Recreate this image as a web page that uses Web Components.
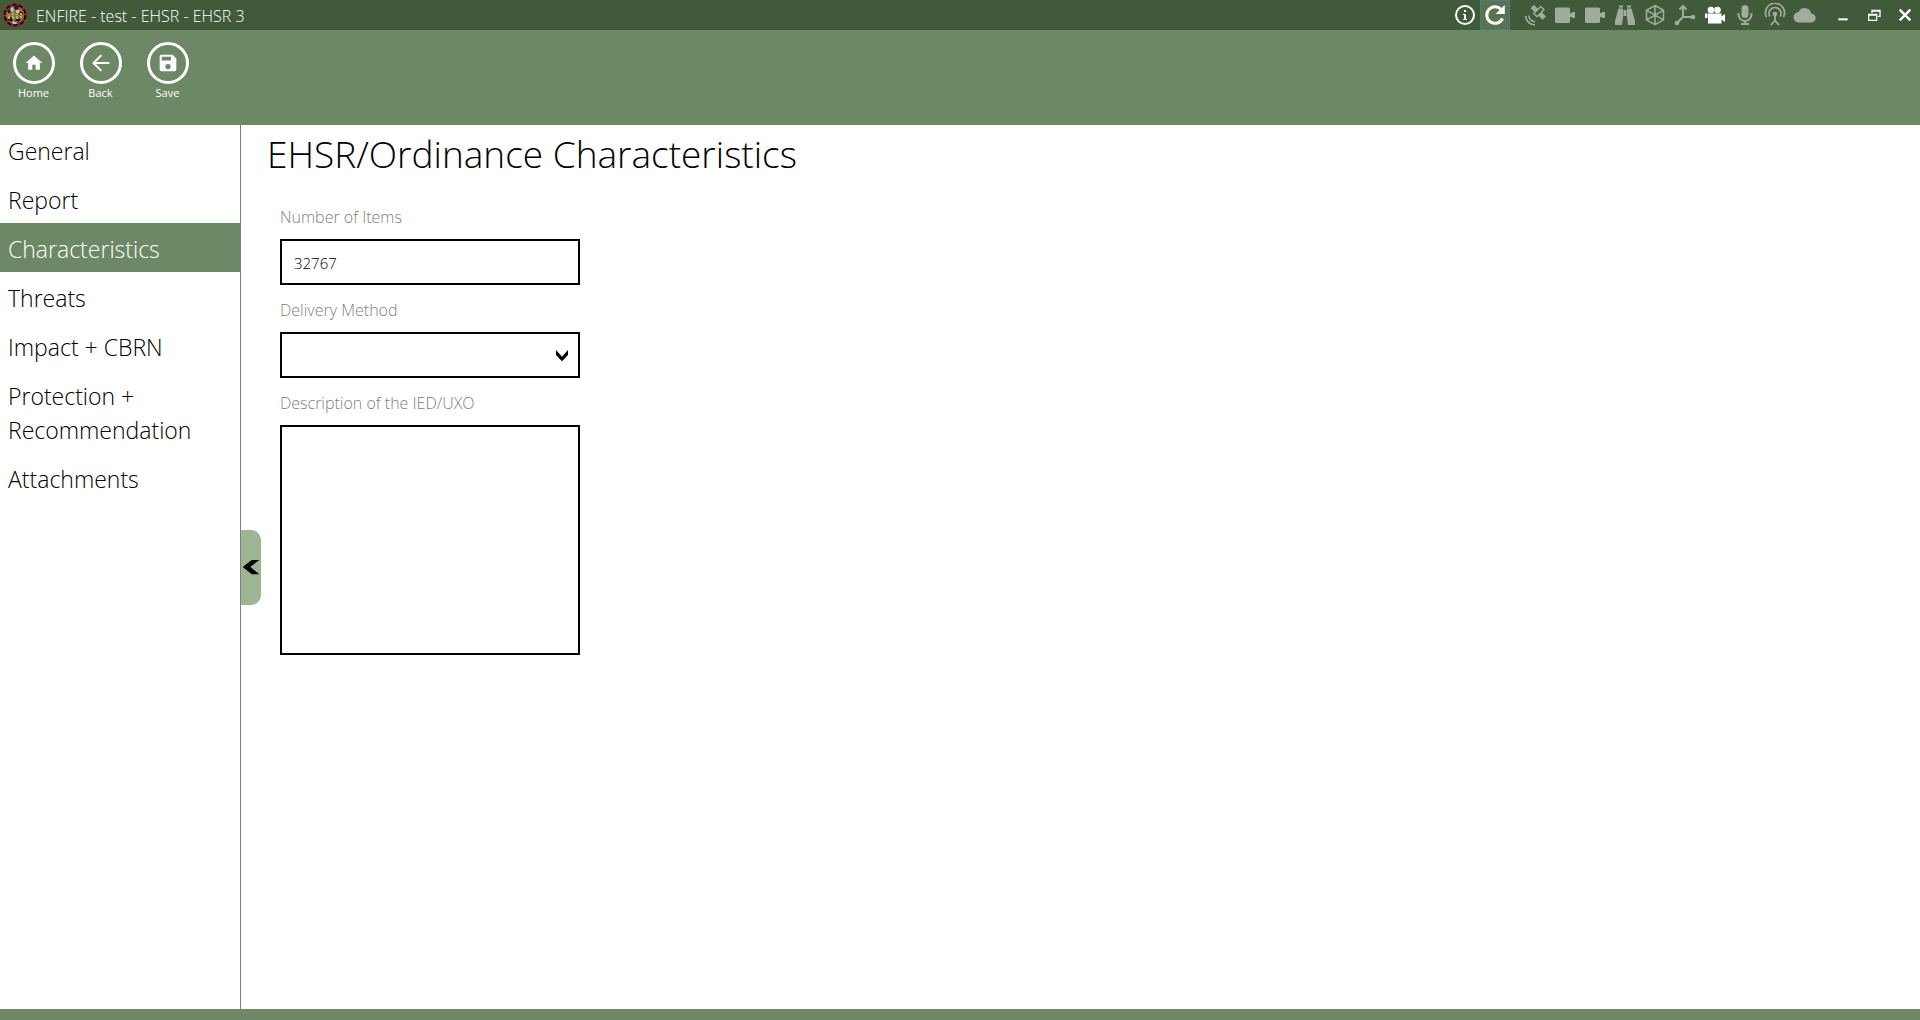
<!DOCTYPE html>
<html lang="en">
<head>
<meta charset="utf-8">
<title>ENFIRE - test - EHSR - EHSR 3</title>
<style>
  html, body { margin: 0; height: 100%; }
  body { font-family: "Open Sans", "Noto Sans", sans-serif; font-weight: 300; color: #000; background: #fff;
    --bar: #6d8864; --title: #415b3a; }
</style>
</head>
<body>
<enfire-app></enfire-app>
<script>
const define = (name, html, setup) => customElements.define(name, class extends HTMLElement {
  constructor() {
    super();
    this.attachShadow({ mode: 'open' }).innerHTML = html;
  }
  connectedCallback() { if (setup) setup(this, this.shadowRoot); }
});

const icons = {
  info: '<circle cx="12" cy="12" r="9" fill="none" stroke="currentColor" stroke-width="2"/><path d="M11 7h2v2h-2zM10 11h3v5h1v1h-4v-1h1v-4h-1z"/>',
  refresh: '<path d="M19.600 15.500A8.300 8.300 0 1 1 18 6.200" fill="none" stroke="currentColor" stroke-width="3"/><path d="M21.800 2v9h-9.300z"/>',
  satellite: '<path d="M11 1.800l4.200 4.200-3.400 3.400L7.600 5.200zM18.800 9.200l4.200 4.200-3.400 3.400-4.200-4.200z"/><path d="M17.800 3.600l3.200 3.200-7 7-3.200-3.200z" fill="none" stroke="currentColor" stroke-width="1.400"/><path d="M5.800 12.500a6.500 6.500 0 0 0 6.200 6.200M2.500 13A10 10 0 0 0 12 22" fill="none" stroke="currentColor" stroke-width="1.700"/>',
  plug: '<rect x="2" y="4.500" width="15" height="15.500" rx="1.500"/><path d="M16 10h3V9h3v6h-3v-1h-3z"/>',
  binoculars: '<path d="M6 2.500h4v2H6zM14 2.500h4v2h-4zM5.500 5.500H10V14l-1 8H2v-4zM18.500 5.500H14V14l1 8h7v-4zM10.500 7h3v6h-3z"/>',
  cube: '<path d="M12 2.500l8.500 4.800v9.500L12 21.600l-8.500-4.800V7.300zM3.500 7.300l8.500 4.700 8.500-4.700M12 12v9.500M12 2.500V12M3.500 16.800L12 12l8.500 4.800" fill="none" stroke="currentColor" stroke-width="1.500"/>',
  axes: '<path d="M10 4v10.500M10 14h10M10 14l-6 6" fill="none" stroke="currentColor" stroke-width="2"/><path d="M6.500 6.500L10 3l3.500 3.500" fill="none" stroke="currentColor" stroke-width="2"/><circle cx="20" cy="14" r="2.300"/><circle cx="4" cy="20" r="2.300"/>',
  camera: '<circle cx="8" cy="7" r="3.300"/><circle cx="14.500" cy="7" r="3.300"/><path d="M5 10.500h13.500v3l3.500-2.500v8l-3.500-2.500v4H5zM2 10.500h2.500V15H2z"/>',
  mic: '<rect x="8.500" y="2" width="7" height="13" rx="3.500"/><path d="M5.500 10v1.500a6.500 6.500 0 0 0 13 0V10M12 18v3M8 21h8" fill="none" stroke="currentColor" stroke-width="2"/>',
  antenna: '<path d="M3.500 14A9.500 9.500 0 1 1 20.500 14M6.800 13.500a6 6 0 1 1 10.400 0" fill="none" stroke="currentColor" stroke-width="1.700"/><circle cx="12" cy="11" r="2.300"/><path d="M12 12v6M8 22l4-4.500 4 4.500" fill="none" stroke="currentColor" stroke-width="1.800"/>',
  cloud: '<path d="M18.300 10.500A6.800 6.800 0 0 0 5.500 9 5 5 0 0 0 6 19.500h12a4.500 4.500 0 0 0 .3-9z"/>',
  minimize: '<path d="M5 17h14v3H5z"/>',
  restore: '<path d="M8 4h14v11h-4v-2h2V7H10v2H8z"/><path d="M3 10h14v11H3zm2 3v6h10v-6z" fill-rule="evenodd"/>',
  close: '<path d="M4 4l16 16M20 4L4 20" fill="none" stroke="currentColor" stroke-width="3.600"/>',
  home: '<path d="M10 20v-6h4v6h5v-8h3L12 3 2 12h3v8z"/>',
  back: '<path d="M22 12H3.500M12.500 2.500L3 12l9.500 9.500" fill="none" stroke="currentColor" stroke-width="2.400"/>',
  save: '<path d="M17.500 2H4a2 2 0 0 0-2 2v16a2 2 0 0 0 2 2h16a2 2 0 0 0 2-2V6.500zM12 19.500a3.200 3.200 0 1 1 0-6.400 3.200 3.200 0 0 1 0 6.400zM15.500 9H4.500V4.500h11z" fill-rule="evenodd"/>',
  left: '<path d="M1 12L13 2.500h10L11 12l12 9.500H13z"/>',
  down: '<path d="M3 4.500l9 10 9-10V12l-9 9.500L3 12z"/>'
};

define('ui-icon', `<style>:host{display:block;width:24px;height:24px}svg{display:block;width:100%;height:100%;fill:currentColor}</style><svg viewBox="0 0 24 24" aria-hidden="true"></svg>`,
  (el, root) => { root.querySelector('svg').innerHTML = icons[el.getAttribute('name')] || ''; });

define('app-emblem', `<style>:host{display:block;width:24px;height:24px}svg{display:block}</style>
<svg width="24" height="24" viewBox="0 0 24 24" aria-hidden="true">
<circle cx="12" cy="12" r="12" fill="#b92e1c"/><circle cx="12" cy="12" r="10.400" fill="none" stroke="#160807" stroke-width="2" stroke-dasharray="5 1.500"/>
<circle cx="12" cy="12" r="9" fill="#77746b"/>
<path d="M4 8l3-3 2 2-3 4zM11 3h5l-1 4h-3zM17 8l3 2-1 4-3-2zM4 16l5-2 1 5-4-1zM13 15l5 1-3 4h-3z" fill="#231b18"/>
<path d="M7 6l3-2 1 4-3 1zM13 7l4-1-1 4h-3zM9 18l3 1 3-1-2 3h-3z" fill="#c2bfb5"/>
<path d="M5 11h2v5H5zM9 10h2v6H9zM13 11h2v5h-2zM17 10h2v5h-2z" fill="#d2a735"/>
<path d="M4 12h16v1H4z" fill="#a17b25"/><circle cx="16" cy="6" r="1" fill="#c6362a"/></svg>`);

define('title-bar', `<style>
:host{display:flex;align-items:center;height:30px;padding:0 0 0 3px;background:var(--title);color:#fff}
.name{flex:1;margin:0 0 0 9px;padding-top:2px;font-size:16px;line-height:28px;font-weight:300}
.group{display:flex}
.status{margin-left:10px}.window{margin-left:7px}
button{display:flex;align-items:center;justify-content:center;width:30px;height:30px;padding:0;border:0;background:none;color:#a0ad9d}
.on{color:#fff}
.active{border:1px solid #4a7a8c;background:#59734f}
.window button{width:31px;color:#fff}
.window ui-icon{width:16px;height:16px}
</style>
<app-emblem></app-emblem><div class="name"><slot></slot></div>
<div class="group"><button class="on" aria-label="Information"><ui-icon name="info"></ui-icon></button><button class="on active" aria-label="Refresh"><ui-icon name="refresh"></ui-icon></button></div>
<div class="group status">
<button aria-label="Satellite"><ui-icon name="satellite"></ui-icon></button><button aria-label="Device 1"><ui-icon name="plug"></ui-icon></button><button aria-label="Device 2"><ui-icon name="plug"></ui-icon></button><button aria-label="Binoculars"><ui-icon name="binoculars"></ui-icon></button><button aria-label="Model"><ui-icon name="cube"></ui-icon></button><button aria-label="Axes"><ui-icon name="axes"></ui-icon></button><button class="on" aria-label="Camera"><ui-icon name="camera"></ui-icon></button><button aria-label="Microphone"><ui-icon name="mic"></ui-icon></button><button aria-label="Antenna"><ui-icon name="antenna"></ui-icon></button><button aria-label="Cloud"><ui-icon name="cloud"></ui-icon></button></div>
<div class="group window"><button aria-label="Minimize"><ui-icon name="minimize"></ui-icon></button><button aria-label="Restore"><ui-icon name="restore"></ui-icon></button><button aria-label="Close"><ui-icon name="close"></ui-icon></button></div>`);

define('tool-button', `<style>
:host{display:block}
button{display:flex;flex-direction:column;align-items:center;width:67px;padding:0;border:0;background:none;color:#fff;font:400 11px/18px "Open Sans","Noto Sans",sans-serif}
.ring{display:flex;align-items:center;justify-content:center;box-sizing:border-box;width:42px;height:42px;border:3px solid;border-radius:50%}
ui-icon{width:20px;height:20px}
</style><button><span class="ring"><ui-icon></ui-icon></span><slot></slot></button>`,
  (el, root) => {
    const icon = document.createElement('ui-icon');
    icon.setAttribute('name', el.getAttribute('icon'));
    root.querySelector('ui-icon').replaceWith(icon);
  });

define('tool-bar', `<style>:host{display:flex;box-sizing:border-box;height:95px;padding-top:12px;background:var(--bar)}</style><slot></slot>`);

define('nav-item', `<style>
:host{display:block}
a{display:block;padding:9px 8px 6px;font-size:23px;line-height:34px;color:inherit;text-decoration:none}
:host([current]) a{background:var(--bar);color:#fff}
</style><a href="#"><slot></slot></a>`,
  (el, root) => { if (el.hasAttribute('current')) root.querySelector('a').setAttribute('aria-current', 'page'); });

define('side-nav', `<style>:host{display:block;box-sizing:border-box;width:241px;border-right:1px solid #808080}nav{display:block}</style><nav><slot></slot></nav>`);

define('collapse-tab', `<style>
:host{display:flex;align-items:center;width:20px}
button{display:flex;align-items:center;width:20px;height:75px;padding:0 1px;border:0;border-radius:0 10px 10px 0;background:#9db592;color:#000}
ui-icon{width:18px;height:20px}
</style><button aria-label="Collapse menu"><ui-icon name="left"></ui-icon></button>`);

define('form-field', `<style>
:host{display:block;width:300px}
label{display:block;margin-bottom:11px;font-size:16px;line-height:22px;color:#808080}
input,select,textarea{display:block;box-sizing:border-box;width:100%;height:46px;margin:0;padding:2px 12px 0;border:2px solid #000;border-radius:0;background:#fff;color:#000;font:300 15px/24px "Open Sans","Noto Sans",sans-serif;appearance:none;resize:none;outline:0}
textarea{height:230px;padding:8px 12px}
.box{display:grid}
.box>*{grid-area:1/1}
ui-icon{width:16px;height:16px;align-self:center;justify-self:end;margin-right:10px;pointer-events:none}
</style><label for="control"></label><div class="box"></div>`,
  (el, root) => {
    root.querySelector('label').textContent = el.getAttribute('label');
    const control = document.createElement(el.getAttribute('control'));
    control.id = 'control';
    const box = root.querySelector('.box');
    box.replaceChildren(control);
    if (control.localName === 'input') control.value = el.getAttribute('value');
    if (control.localName === 'select') {
      control.append(document.createElement('option'));
      box.insertAdjacentHTML('beforeend', '<ui-icon name="down"></ui-icon>');
    }
  });

define('field-page', `<style>
:host{display:block;flex:1}
h1{margin:0;padding:1px 0 1px 6px;font-size:37px;line-height:56px;font-weight:300}
.fields{display:flex;flex-direction:column;gap:14px;padding:23px 19px}
</style><h1><slot name="heading"></slot></h1><div class="fields"><slot></slot></div>`);

define('enfire-app', `<style>
:host{display:flex;flex-direction:column;min-height:100vh}
main{display:flex;flex:1}
footer{height:11px;background:var(--bar)}
</style>
<title-bar>ENFIRE - test - EHSR - EHSR 3</title-bar>
<tool-bar><tool-button icon="home">Home</tool-button><tool-button icon="back">Back</tool-button><tool-button icon="save">Save</tool-button></tool-bar>
<main>
<side-nav><nav-item>General</nav-item><nav-item>Report</nav-item><nav-item current>Characteristics</nav-item><nav-item>Threats</nav-item><nav-item>Impact + CBRN</nav-item><nav-item>Protection + Recommendation</nav-item><nav-item>Attachments</nav-item></side-nav>
<collapse-tab></collapse-tab>
<field-page><span slot="heading">EHSR/Ordinance Characteristics</span>
<form-field label="Number of Items" control="input" value="32767"></form-field>
<form-field label="Delivery Method" control="select"></form-field>
<form-field label="Description of the IED/UXO" control="textarea"></form-field>
</field-page>
</main>
<footer></footer>`);
</script>
</body>
</html>
